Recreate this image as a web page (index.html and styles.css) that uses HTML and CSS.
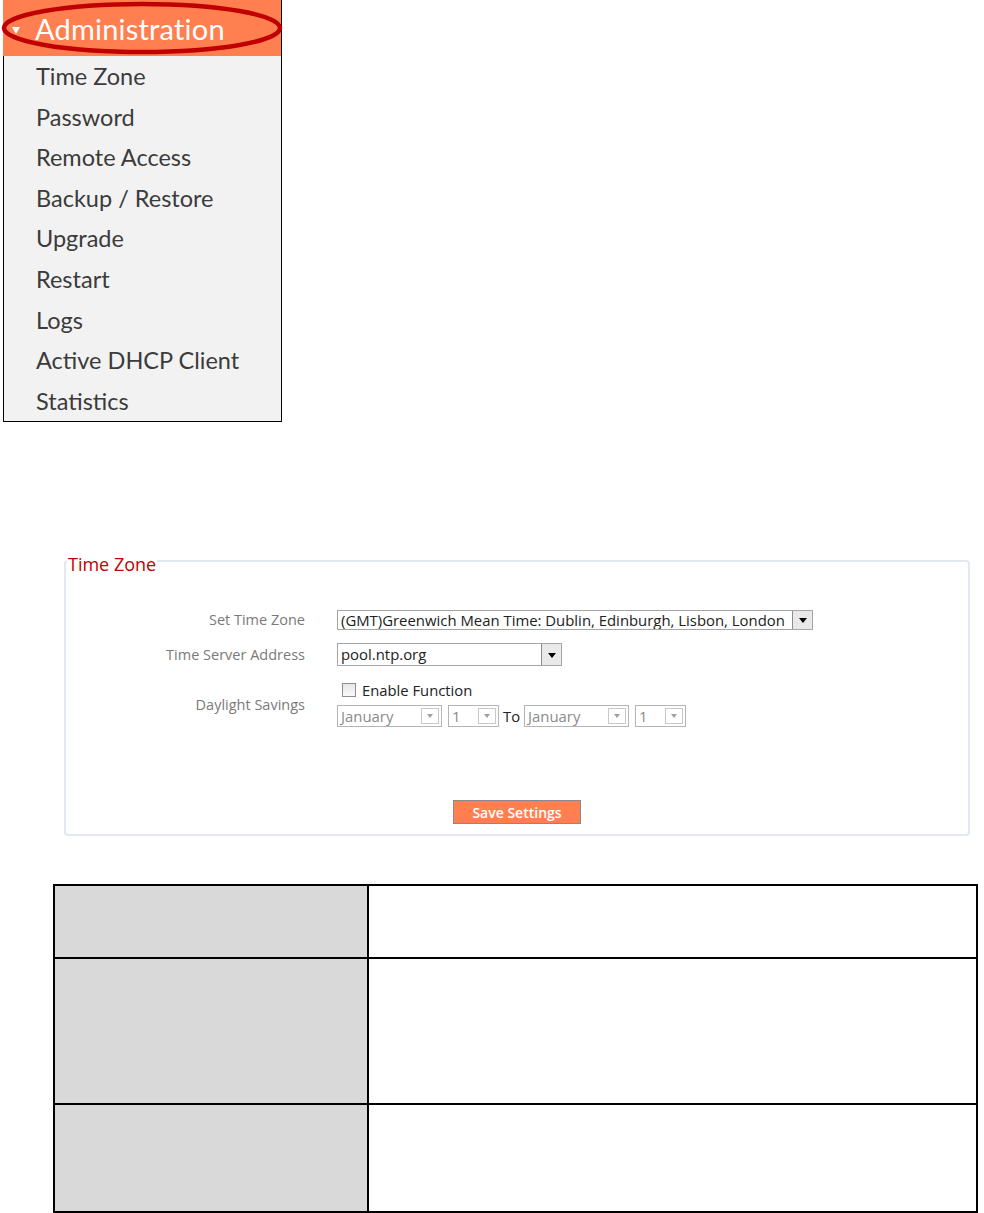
FILE: index.html
```html
<!DOCTYPE html>
<html>
<head>
<meta charset="utf-8">
<link rel="stylesheet" href="styles.css">
</head>
<body>
<div class="menu">
  <div class="menu-head">
    <span class="caret"></span><span class="menu-title">Administration</span>
  </div>
  <svg class="ring" width="286" height="58" viewBox="0 0 286 58"><ellipse cx="142" cy="28" rx="138" ry="24" fill="none" stroke="#c00000" stroke-width="4.5"/></svg>
  <ul class="menu-list">
    <li>Time Zone</li>
    <li>Password</li>
    <li>Remote Access</li>
    <li>Backup / Restore</li>
    <li>Upgrade</li>
    <li>Restart</li>
    <li>Logs</li>
    <li>Active DHCP Client</li>
    <li>Statistics</li>
  </ul>
</div>

<fieldset class="panel">
  <legend>Time Zone</legend>
  <div class="form">
    <div class="lbl r1">Set Time Zone</div>
    <div class="ctl r1">
      <div class="sel tz"><span class="val">(GMT)Greenwich Mean Time: Dublin, Edinburgh, Lisbon, London</span><span class="arr"></span></div>
    </div>
    <div class="lbl r2">Time Server Address</div>
    <div class="ctl r2">
      <div class="sel ntp"><span class="val">pool.ntp.org</span><span class="arr"></span></div>
    </div>
    <div class="lbl r3">Daylight Savings</div>
    <div class="ctl r3">
      <label class="chk"><span class="box"></span>Enable Function</label>
      <div class="dates">
        <div class="sel dis month"><span class="val">January</span><span class="arr"></span></div>
        <div class="sel dis day"><span class="val">1</span><span class="arr"></span></div>
        <span class="to">To</span>
        <div class="sel dis month"><span class="val">January</span><span class="arr"></span></div>
        <div class="sel dis day"><span class="val">1</span><span class="arr"></span></div>
      </div>
    </div>
  </div>
  <div class="actions"><button class="save">Save Settings</button></div>
</fieldset>

<table class="info">
  <tr class="row1"><td class="k"></td><td class="v"></td></tr>
  <tr class="row2"><td class="k"></td><td class="v"></td></tr>
  <tr class="row3"><td class="k"></td><td class="v"></td></tr>
</table>
</body>
</html>
```
FILE: styles.css
```css
* { box-sizing: border-box; }
body {
  margin: 0;
  background: #fff;
  font-family: "Open Sans", "Liberation Sans", sans-serif;
}

/* ---------- menu ---------- */
.menu {
  position: relative;
  margin-left: 3px;
  width: 279px;
  border-right: 1px solid #000;
  border-left: 1px solid #000;
  border-bottom: 1px solid #000;
  background: #f2f2f2;
}
.menu-head {
  height: 56px;
  background: #ff7f50;
  display: flex;
  align-items: center;
  margin-left: -1px;
  padding-left: 9px;
}
.caret {
  width: 0; height: 0;
  border-left: 4px solid transparent;
  border-right: 4px solid transparent;
  border-top: 7px solid #fff;
  margin-top: 4px;
  margin-right: 15px;
}
.menu-title {
  color: #fff;
  font-family: Lato, "Open Sans", sans-serif;
  font-size: 29px;
  letter-spacing: 0.2px;
}
.ring {
  position: absolute;
  left: -4px;
  top: 0;
}
.menu-list {
  list-style: none;
  margin: 0;
  padding: 0 0 0 32px;
}
.menu-list li {
  height: 40.6px;
  line-height: 40.6px;
  font-family: Lato, "Open Sans", sans-serif;
  font-size: 23.5px;
  color: #3b3b3b;
}

/* ---------- panel ---------- */
.panel {
  margin: 127px 0 0 64px;
  width: 906px;
  height: 287px;
  border: 2px solid #e2e8ef;
  border-radius: 4px;
  padding: 0;
  position: relative;
}
.panel legend {
  color: #c00000;
  font-size: 18px;
  padding: 6px 1px 0 1px;
  margin-left: 1px;
  line-height: 18px;
}
.form {
  display: grid;
  grid-template-columns: 239px 1fr;
  column-gap: 32px;
  padding-top: 35px;
  font-size: 14.5px;
}
.lbl {
  color: #7a7a7a;
  text-align: right;
  display: flex;
  align-items: center;
  justify-content: flex-end;
}
.ctl { display: flex; flex-direction: column; }
.r1 { height: 23px; }
.r2 { height: 23px; margin-top: 12px; }
.r3 { margin-top: 15px; }
.ctl.r2, .ctl.r1 { justify-content: center; }

.sel {
  display: flex;
  align-items: stretch;
  height: 20px;
  border: 1px solid #a6a6a6;
  background: #fff;
  color: #222;
}
.sel .val {
  flex: 1;
  padding-left: 3px;
  line-height: 18px;
  white-space: nowrap;
  overflow: hidden;
  font-size: 14.9px;
}
.sel .arr {
  width: 20px;
  flex: none;
  border-left: 1px solid #8c8c8c;
  background: #e9e9e9;
  position: relative;
  margin: 0;
}
.sel .arr::after {
  content: "";
  position: absolute;
  left: 50%; top: 50%;
  margin-left: -4px; margin-top: -2px;
  border-left: 4px solid transparent;
  border-right: 4px solid transparent;
  border-top: 5px solid #000;
}
.sel.tz { width: 476px; }
.sel.ntp { width: 225px; height: 23px; }
.sel.ntp .val { line-height: 21px; }

.chk {
  display: flex;
  align-items: center;
  height: 18px;
  color: #222;
  font-size: 14.8px;
  padding-left: 5px;
}
.chk .box {
  width: 14px; height: 14px;
  border: 1px solid #8e8e8e;
  background: linear-gradient(#e6e6e6, #fafafa);
  margin-right: 6px;
}
.dates {
  display: flex;
  align-items: center;
  margin-top: 6px;
  gap: 6px;
}
.sel.dis { height: 22px; border-color: #b5b5b5; color: #8a8a8a; }
.sel.dis .val { line-height: 20px; }
.sel.dis .arr { background: #fff; margin: 2px 2px 2px 0; border: 1px solid #c8c8c8; width: 18px; }
.sel.dis .arr::after { border-top-color: #a0a0a0; border-left-width: 3px; border-right-width: 3px; border-top-width: 4px; margin-left: -3px; }
.sel.month { width: 105px; }
.sel.day { width: 51px; }
.to { font-size: 14.8px; color: #222; margin: 0 -2px; }

.actions {
  display: flex;
  justify-content: center;
  margin-top: 73px;
}
.save {
  width: 128px;
  height: 24px;
  background: #ff7f50;
  border: 1px solid #8a8a8a;
  color: #fff;
  font-family: "Open Sans", sans-serif;
  font-weight: 600;
  font-size: 14px;
  padding: 0;
}

/* ---------- info table ---------- */
.info {
  margin: 48px 0 0 53px;
  width: 925px;
  border-collapse: collapse;
}
.info td {
  border: 2px solid #000;
  padding: 0;
}
.info .k { width: 314px; background: #d9d9d9; }
.info .v { background: #fff; }
.row1 td { height: 73px; }
.row2 td { height: 146px; }
.row3 td { height: 108px; }
```
